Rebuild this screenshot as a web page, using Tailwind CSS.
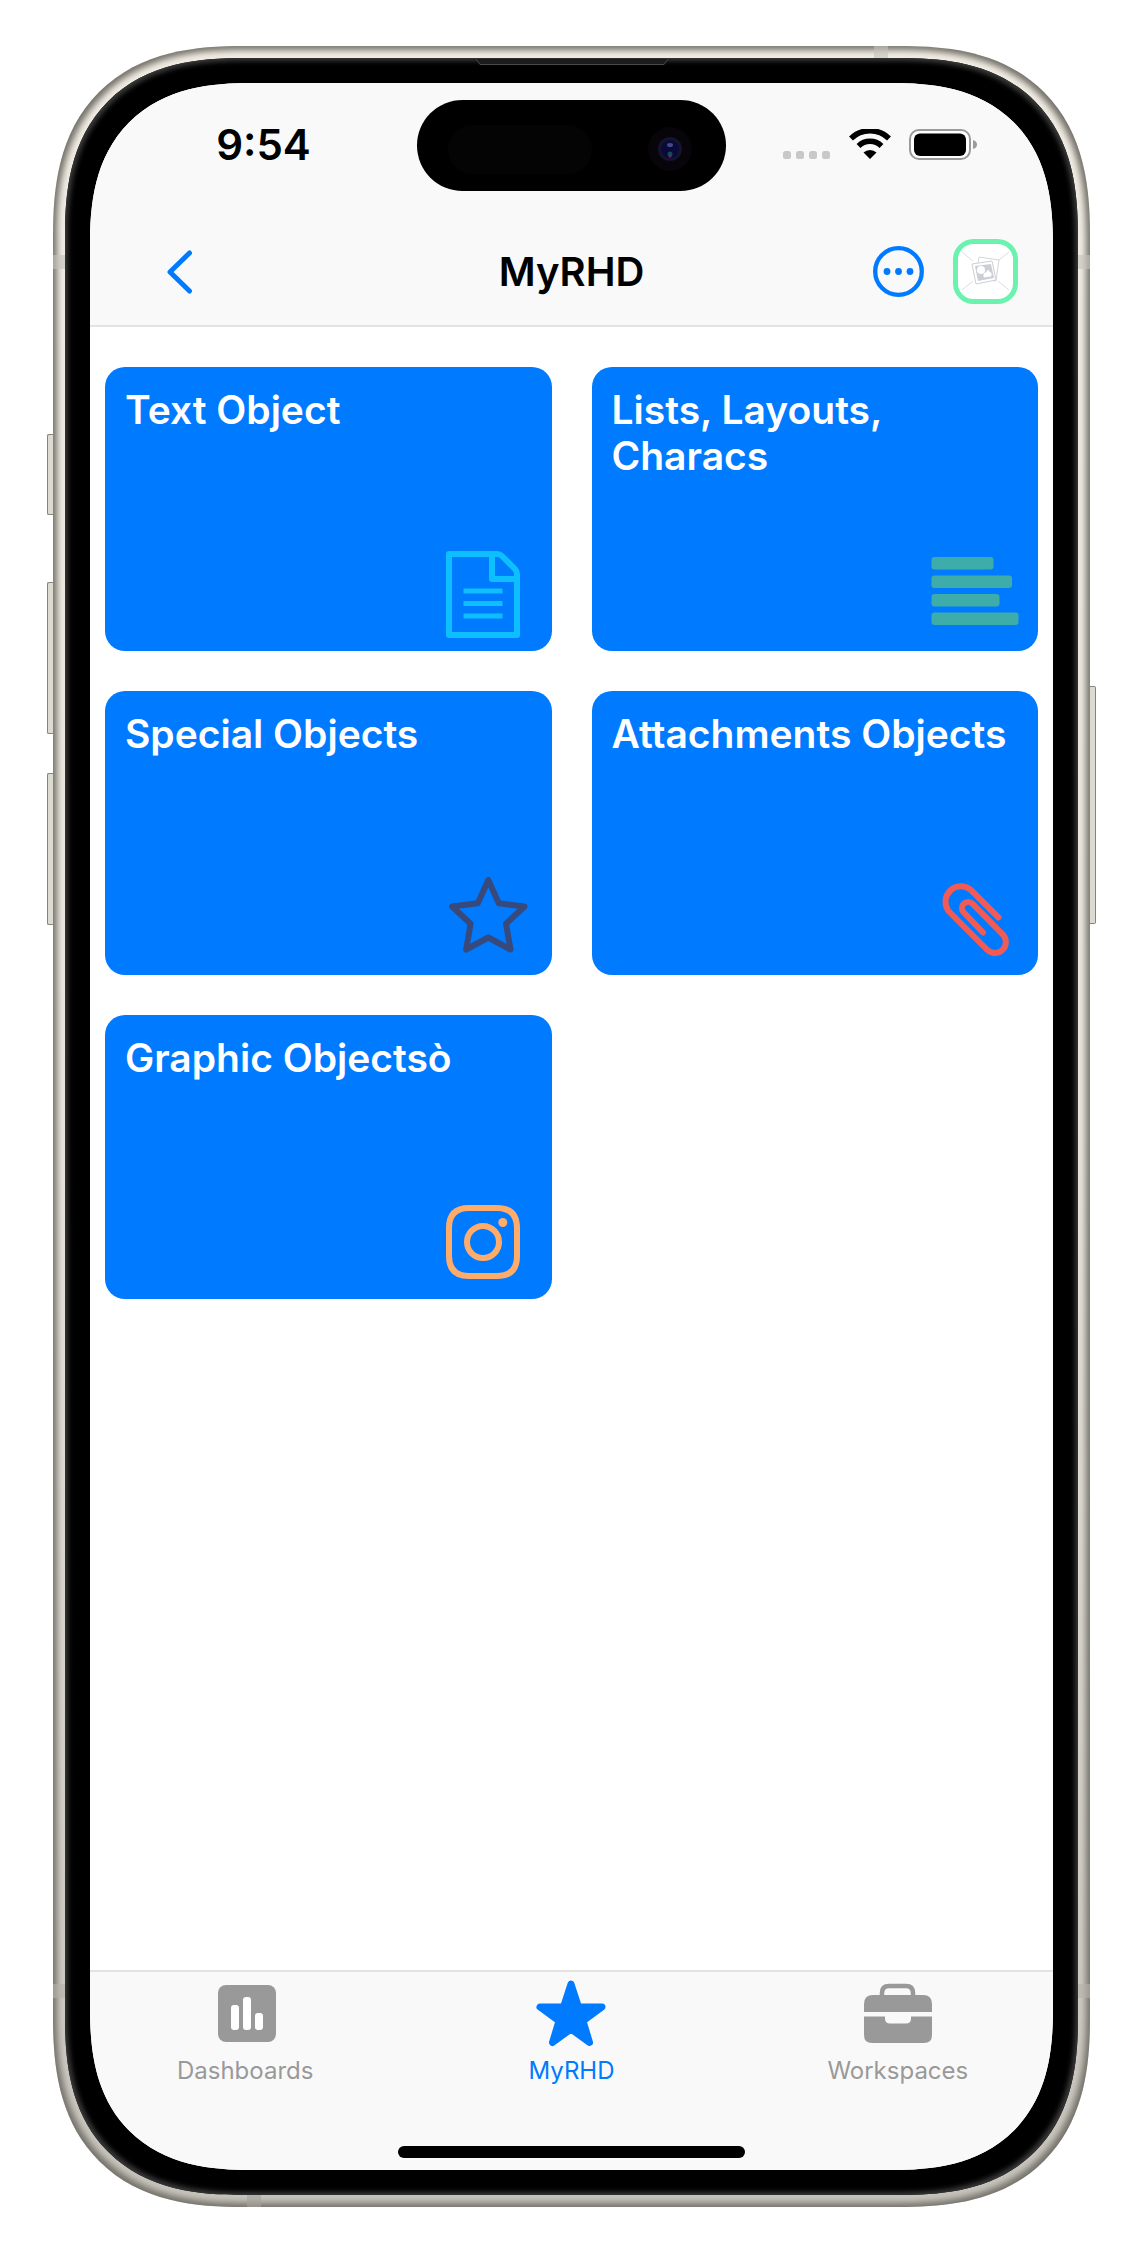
<!DOCTYPE html>
<html lang="en">
<head>
<meta charset="utf-8">
<meta name="viewport" content="width=device-width, initial-scale=1">
<title>MyRHD</title>
<script src="https://cdn.jsdelivr.net/npm/@tailwindcss/browser@4"></script>
</head>
<body class="flex min-h-screen bg-white py-[46px] pr-[52px] pl-[53px] font-['Inter','Liberation_Sans',sans-serif] text-black">

<!-- Phone case: metal rim, black bezel, screen -->
<div class="relative flex flex-1 rounded-[190px] bg-linear-to-b from-[#f1ede4] via-[#e9e5dc] to-[#c6c3bb] p-3 shadow-[inset_0_0_6px_4px_#75726b] [corner-shape:superellipse(1.32)]">
  <!-- Side keys -->
  <span class="absolute top-[388px] -left-1.5 h-[81px] w-1.5 rounded-l-xs border border-r-0 border-[#85837c] bg-[#dddad2]"></span>
  <span class="absolute top-[536px] -left-1.5 h-[152px] w-1.5 rounded-l-xs border border-r-0 border-[#85837c] bg-[#dddad2]"></span>
  <span class="absolute top-[727px] -left-1.5 h-[152px] w-1.5 rounded-l-xs border border-r-0 border-[#85837c] bg-[#dddad2]"></span>
  <span class="absolute top-[640px] -right-1.5 h-[238px] w-1.5 rounded-r-xs border border-l-0 border-[#85837c] bg-[#dddad2]"></span>
  <!-- Antenna bands -->
  <span class="absolute top-[209px] left-0 h-3.5 w-3 bg-[#c4c1ba]/60"></span>
  <span class="absolute top-[209px] right-0 h-3.5 w-3 bg-[#c4c1ba]/60"></span>
  <span class="absolute bottom-[209px] left-0 h-3.5 w-3 bg-[#b4b1aa]/60"></span>
  <span class="absolute right-0 bottom-[209px] h-3.5 w-3 bg-[#b4b1aa]/60"></span>
  <span class="absolute top-0 right-[202px] h-3 w-3.5 bg-[#c4c1ba]/60"></span>
  <span class="absolute bottom-0 left-[194px] h-3 w-3.5 bg-[#a4a19a]/60"></span>

  <div class="relative flex flex-1 rounded-[178px] bg-black p-[25px] shadow-[inset_0_0_5px_3px_#3a3a3a] [corner-shape:superellipse(1.32)]">
    <!-- Earpiece -->
    <svg class="absolute top-0 left-1/2 -translate-x-1/2" width="192" height="8" viewBox="0 0 192 8" fill="#1c1c1c" stroke="#4a4a4a" aria-hidden="true"><path d="M0 1L4 6.500H188L192 1"/></svg>

    <div class="flex flex-1 flex-col overflow-hidden rounded-[162px] bg-white [corner-shape:superellipse(1.32)]">

      <header class="border-b-2 border-[#e3e3e3] bg-[#f9f9f9]">
        <div class="grid h-[124px] grid-cols-[1fr_309px_1fr] items-center">
          <time class="pl-5 text-center text-[42px] leading-none font-semibold">9:54</time>
          <div class="relative h-[91px] rounded-full bg-black">
            <span class="absolute top-[25px] left-[31px] h-[49px] w-36 rounded-full bg-[#040404]"></span>
            <svg class="absolute top-[27px] right-[34px]" width="44" height="44" viewBox="0 0 44 44" aria-hidden="true">
              <circle cx="22" cy="22" r="22" fill="#08050a"/>
              <circle cx="22" cy="22" r="12" fill="#14142e"/>
              <circle cx="22" cy="22" r="9" fill="#090a38"/>
              <ellipse cx="22" cy="18" rx="3" ry="2" fill="#46488c"/>
              <circle cx="22" cy="27" r="2.500" fill="#0d4d58"/>
              <circle cx="22" cy="29" r="1.500" fill="#75206f"/>
            </svg>
          </div>
          <div class="flex justify-center pr-5">
            <svg width="196" height="32" viewBox="0 0 196 32" role="img" aria-label="No signal, Wi-Fi on, battery full">
              <g fill="#c8c8c8">
                <rect x="1" y="22" width="8" height="8" rx="2.500"/>
                <rect x="14" y="22" width="8" height="8" rx="2.500"/>
                <rect x="27" y="22" width="8" height="8" rx="2.500"/>
                <rect x="40" y="22" width="8" height="8" rx="2.500"/>
              </g>
              <g fill="none" stroke="#000" stroke-width="5.500">
                <path d="M69 9.500A27 27 0 0 1 107 9.500"/>
                <path d="M76.500 17A16.500 16.500 0 0 1 99.500 17"/>
              </g>
              <path d="M81.500 23.500A9.500 9.500 0 0 1 94.500 23.500L88 30Z"/>
              <rect x="128" y="1" width="60" height="29" rx="9" fill="#fff" stroke="#9b9b9b" stroke-width="2"/>
              <rect x="132" y="4.500" width="52" height="22.500" rx="6"/>
              <path d="M191 11q4 1 4 4.500t-4 4.500z" fill="#9b9b9b"/>
            </svg>
          </div>
        </div>
        <div class="grid grid-cols-[1fr_auto_1fr] items-center pt-8 pr-[35px] pb-[21px] pl-[77px]">
          <button type="button" class="justify-self-start" aria-label="Back">
            <svg width="26" height="44" viewBox="0 0 26 44" fill="none" stroke="#007aff" stroke-width="5" stroke-linecap="round" stroke-linejoin="round"><path d="M22.500 3L3 22L22.500 41"/></svg>
          </button>
          <h1 class="pr-[42px] text-[40px] leading-[64px] font-semibold">MyRHD</h1>
          <div class="flex items-center justify-end gap-[29px]">
            <button type="button" aria-label="More">
              <svg class="block" width="51" height="51" viewBox="0 0 51 51" fill="#007aff"><circle cx="25.500" cy="25.500" r="23.300" fill="none" stroke="#007aff" stroke-width="4.300"/><circle cx="14" cy="25.500" r="3.400"/><circle cx="25.500" cy="25.500" r="3.400"/><circle cx="37" cy="25.500" r="3.400"/></svg>
            </button>
            <button type="button" aria-label="Profile">
              <svg class="block" width="65" height="65" viewBox="0 0 65 65" fill="none">
                <rect x="2.500" y="2.500" width="60" height="60" rx="18" fill="#fff" stroke="#6af2ae" stroke-width="5"/>
                <path d="M9 13l11 9M56 13l-10 8M9 51l11-9M56 51l-11-9" stroke="#dcdddf"/>
                <path d="M26 18l20 3-3 21-20-3z" fill="#fff" stroke="#d5d7db"/>
                <path d="M19 25l20-3 4 19-20 4z" fill="#fff" stroke="#cdd0d5"/>
                <path d="M22 27l16-2 3 14-16 3z" fill="#cbced4"/>
                <circle cx="28" cy="31" r="4" fill="#fff"/><path d="M31 38v-3l3-2 1-2 1 2 2 1v3z" fill="#fff" stroke="#fff"/>
              </svg>
            </button>
          </div>
        </div>
      </header>

      <main class="grid flex-1 auto-rows-min grid-cols-2 gap-10 px-[15px] py-10 text-white">
        <a href="#text" class="flex min-h-[284px] flex-col justify-between rounded-[20px] bg-[#007aff]">
          <h2 class="px-5 pt-5 text-[39px] leading-[46px] font-semibold">Text Object</h2>
          <svg class="self-end" width="120" height="120" viewBox="0 0 120 120" fill="none" stroke="#0dbfff" stroke-width="6" stroke-linejoin="round" aria-hidden="true"><path d="M17 23H65q3 0 5 2L83 38q2 2 2 5V104H17ZM60 23V48H85"/><path d="M34 60H68M34 72.500H68M34 85H68" stroke-linecap="square" stroke-width="5"/></svg>
        </a>
        <a href="#lists" class="flex min-h-[284px] flex-col justify-between rounded-[20px] bg-[#007aff]">
          <h2 class="px-5 pt-5 text-[39px] leading-[46px] font-semibold">Lists, Layouts, Characs</h2>
          <svg class="self-end" width="120" height="120" viewBox="0 0 120 120" fill="#3eada9" aria-hidden="true"><rect x="13.500" y="26" width="62" height="12.500" rx="3"/><rect x="13.500" y="44.500" width="80.500" height="12.500" rx="3"/><rect x="13.500" y="63" width="68" height="12.500" rx="3"/><rect x="13.500" y="81.500" width="87" height="12.500" rx="3"/></svg>
        </a>
        <a href="#special" class="flex min-h-[284px] flex-col justify-between rounded-[20px] bg-[#007aff]">
          <h2 class="px-5 pt-5 text-[39px] leading-[46px] font-semibold">Special Objects</h2>
          <svg class="self-end" width="120" height="120" viewBox="0 0 120 120" fill="none" stroke="#384a7c" stroke-width="6" stroke-linejoin="round" aria-hidden="true"><path d="M56.300 25L66.800 48.300L92.500 51.500L74 68.700L78.500 94.500L56.300 82.500L34.100 94.500L38.600 68.700L20.100 51.500L45.800 48.300Z"/></svg>
        </a>
        <a href="#attachments" class="flex min-h-[284px] flex-col justify-between rounded-[20px] bg-[#007aff]">
          <h2 class="px-5 pt-5 text-[39px] leading-[46px] font-semibold">Attachments Objects</h2>
          <svg class="self-end" width="120" height="120" viewBox="0 0 120 120" fill="none" stroke="#f05b56" stroke-width="6" stroke-linecap="round" stroke-linejoin="round" aria-hidden="true"><path d="M80.500 62.500L52.400 34.500A15.500 15.500 0 0 0 30.500 56L69 94.700A10.900 10.900 0 0 0 84.700 79.300L54.400 48.700A6 6 0 0 0 45.700 57.300L65 77.500"/></svg>
        </a>
        <a href="#graphic" class="flex min-h-[284px] flex-col justify-between rounded-[20px] bg-[#007aff]">
          <h2 class="px-5 pt-5 text-[39px] leading-[46px] font-semibold">Graphic Objectsò</h2>
          <svg class="self-end" width="120" height="120" viewBox="0 0 120 120" fill="none" stroke="#ffac6b" stroke-width="6" aria-hidden="true"><path d="M17 63V49Q17 29 37 29H65Q85 29 85 49V77Q85 97 65 97H37Q17 97 17 77Z"/><circle cx="51" cy="63" r="16"/><circle cx="70.800" cy="43.500" r="4.500" fill="#ffac6b" stroke="none"/></svg>
        </a>
      </main>

      <nav class="border-t-2 border-[#e3e3e3] bg-[#f9f9f9] pb-3 text-2xl text-[#999]">
        <div class="-mx-2 grid grid-cols-3 pt-2">
          <a href="#dashboards" class="flex flex-col items-center">
            <svg width="68" height="68" viewBox="0 0 68 68" fill="#999" aria-hidden="true"><rect x="7" y="5" width="58" height="57" rx="8"/><g fill="#fff"><rect x="20" y="25" width="8" height="25" rx="3"/><rect x="32" y="17" width="8" height="33" rx="3"/><rect x="44" y="33" width="8" height="17" rx="3"/></g></svg>
            <span class="mt-[7px] leading-8">Dashboards</span>
          </a>
          <a href="#myrhd" aria-current="page" class="flex flex-col items-center text-[#007aff]">
            <svg width="70" height="68" viewBox="0 0 70 68" fill="#007aff" stroke="#007aff" stroke-width="7" stroke-linejoin="round" aria-hidden="true"><path d="M35 4L42.500 27H66L47 41L53.500 62.500L35 49L16.500 62.500L23 41L4 27H27.500Z"/></svg>
            <span class="mt-[7px] leading-8">MyRHD</span>
          </a>
          <a href="#workspaces" class="flex flex-col items-center">
            <svg width="70" height="68" viewBox="0 0 70 68" fill="#999" aria-hidden="true"><path d="M19 17v-4q0-7 7-7h17q7 0 7 7v4" fill="none" stroke="#999" stroke-width="4.500"/><path d="M1 24q0-9 9-9H60q9 0 9 9V32H1ZM1 36.500H22v2q0 5 5 5H43q5 0 5-5v-2H69V55q0 8-8 8H9q-8 0-8-8Z"/></svg>
            <span class="mt-[7px] leading-8">Workspaces</span>
          </a>
        </div>
        <div class="mx-auto mt-[59px] h-3 w-[36%] rounded-full bg-black"></div>
      </nav>

    </div>
  </div>
</div>
</body>
</html>
